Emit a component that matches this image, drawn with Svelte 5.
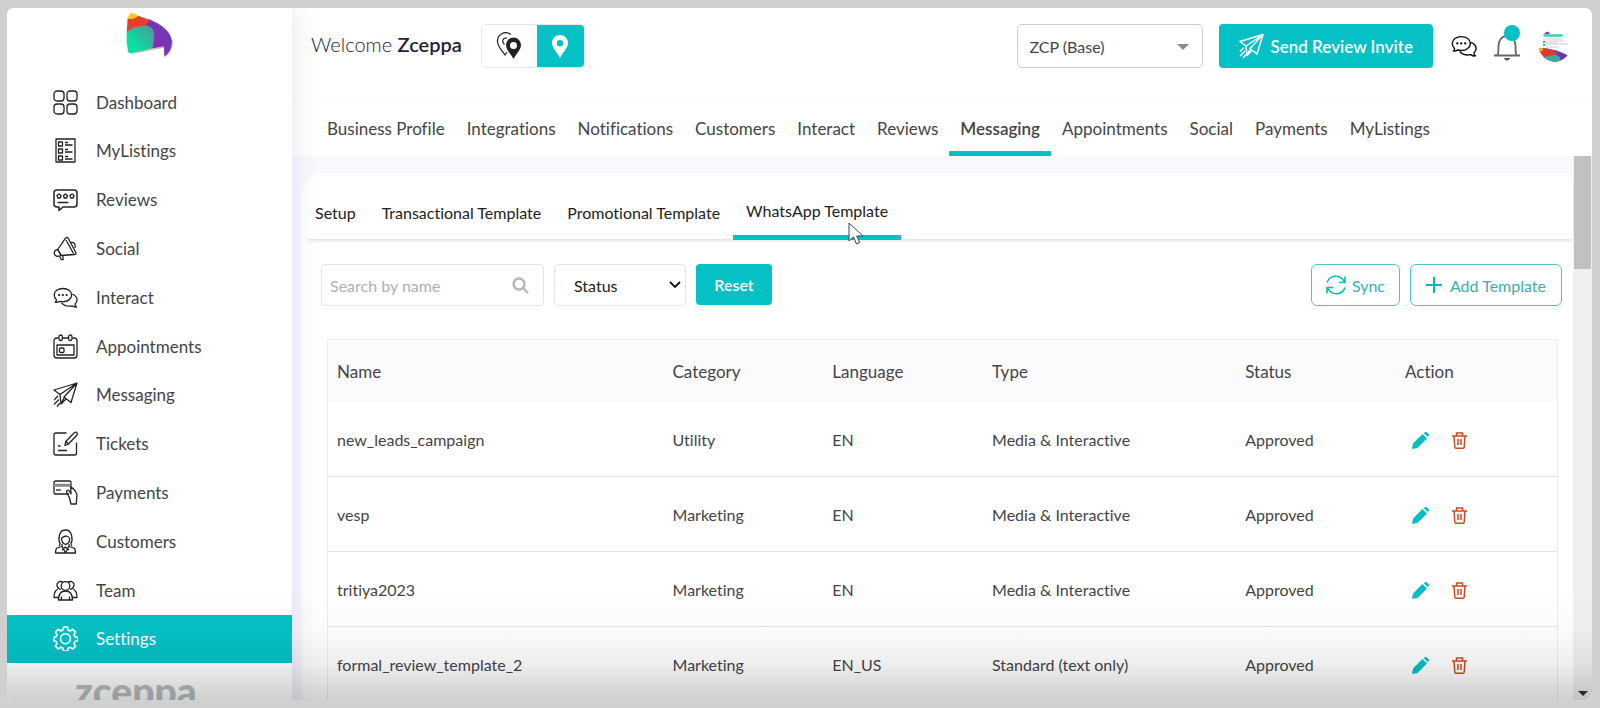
<script lang="ts">
	type Template = {
		name: string;
		category: string;
		language: string;
		type: string;
		status: string;
	};

	const menu = [
		'Dashboard',
		'MyListings',
		'Reviews',
		'Social',
		'Interact',
		'Appointments',
		'Messaging',
		'Tickets',
		'Payments',
		'Customers',
		'Team',
		'Settings'
	];

	const sections = [
		'Business Profile',
		'Integrations',
		'Notifications',
		'Customers',
		'Interact',
		'Reviews',
		'Messaging',
		'Appointments',
		'Social',
		'Payments',
		'MyListings'
	];

	const tabs = ['Setup', 'Transactional Template', 'Promotional Template', 'WhatsApp Template'];

	const templates: Template[] = [
		{ name: 'new_leads_campaign', category: 'Utility', language: 'EN', type: 'Media & Interactive', status: 'Approved' },
		{ name: 'vesp', category: 'Marketing', language: 'EN', type: 'Media & Interactive', status: 'Approved' },
		{ name: 'tritiya2023', category: 'Marketing', language: 'EN', type: 'Media & Interactive', status: 'Approved' },
		{ name: 'formal_review_template_2', category: 'Marketing', language: 'EN_US', type: 'Standard (text only)', status: 'Approved' }
	];

	let active_menu = $state('Settings');
	let active_section = $state('Messaging');
	let active_tab = $state('WhatsApp Template');
	let single_location = $state(true);
	let search = $state('');
	let status = $state('');

	let rows = $derived(
		templates.filter((t) => t.name.includes(search) && (status === '' || t.status === status))
	);

	function reset() {
		search = '';
		status = '';
	}
</script>

{#snippet chat_icon()}
	<path d="M2.2 15.4c.9-.6 1.3-1.500 1.200-2.600C2 11.400 1.200 9.800 1.200 8c0-3.900 3.900-6.500 8.700-6.500s8.700 2.600 8.700 6.500-3.900 6.800-8.700 6.800c-1.200 0-2.300-.2-3.300-.5-1.300.9-2.700 1.300-4.400 1.100z" />
	<path d="M19.200 7c3.100 1.200 4.900 3.300 4.900 5.800 0 1.700-.8 3.200-2.100 4.300 0 1.300.5 2.200 1.500 2.900-1.700.3-3.200-.2-4.400-1.200-4.300.9-8.300-.3-10.600-3" />
	<path d="M6 8h.1M9.800 8h.1M13.600 8h.1" stroke-width="2.200" stroke-linecap="round" />
{/snippet}

{#snippet plane_icon()}
	<path d="M24 1 1 8l6 4.500L24 1 11 15l7 5.500L24 1zM7 12.500l1 9.500 3.300-6.800M8 22l5-5" />
	<path d="M5 14l-4 4M6 17.500l-5 5M7 21l-3 3.500" />
{/snippet}

{#snippet menu_icon(name: string)}
	<svg class="menu_icon" viewBox="0 0 25 25" fill="none" stroke="currentColor" stroke-width="1.300" stroke-linejoin="round" aria-hidden="true">
		{#if name === 'Dashboard'}
			<rect x="1" y="1" width="10" height="10" rx="3" />
			<rect x="14" y="1" width="10" height="10" rx="3" />
			<rect x="1" y="14" width="10" height="10" rx="3" />
			<rect x="14" y="14" width="10" height="10" rx="3" />
		{:else if name === 'MyListings'}
			<path d="M3 1h19v23H3z" />
			<path d="M5.500 4h4v4h-4zM5.500 11h4v4h-4zM5.500 18h4v4h-4z" />
			<path d="M12 4.500h3M12 7h7.500M12 11.500h3M12 14h7.500M12 18.500h3M12 21h7.500" />
		{:else if name === 'Reviews'}
			<path d="M4 3h17q3 0 3 3v11q0 3-3 3H10l-4 3.500V20H4q-3 0-3-3V6q0-3 3-3z" stroke-width="1.500" />
			<path d="M6 7l2 1.500-.8 2.500H4.800L4 8.500zM12.500 7l2 1.500-.8 2.500h-2.400l-.8-2.500zM19 7l2 1.500-.8 2.500h-2.400L17 8.500z" />
			<path d="M4.500 15.500h11" />
		{:else if name === 'Social'}
			<path d="M12.500 2.200q1.500-1.700 2.700 0l7.600 14.300q.7 2-1.500 2L8 19.500l-3.300-6z" />
			<path d="M13 4l7.500 13.500M5 13.300q-4 .8-3.700 4 .8 4.400 6.700 2.200M5 14l3 5M18 6.500q5-.5 4 5.300M6.500 20.200l1.700 3.300 2 .2-.4-4.200" />
		{:else if name === 'Interact'}
			<g transform="translate(0 2)">{@render chat_icon()}</g>
		{:else if name === 'Appointments'}
			<path d="M5.500 4H4Q1 4 1 7v14q0 3 3 3h17q3 0 3-3V7q0-3-3-3h-1.500M10 4h5" />
			<rect x="6" y="1" width="3.400" height="5.500" rx="1.700" />
			<rect x="15.600" y="1" width="3.400" height="5.500" rx="1.700" />
			<path d="M4 11h17v10H4z" />
			<rect x="6.500" y="14" width="4.500" height="4.500" rx="1" />
		{:else if name === 'Messaging'}
			{@render plane_icon()}
		{:else if name === 'Tickets'}
			<path d="M13.500 2H3q-2 0-2 2v18q0 2 2 2h18.500q2 0 2-2V11.500" />
			<path d="M12 14.500l.8-4L21.500 1.500q1.500-.8 2.500.4.8 1.300-.2 2.300L15.500 13zM13 10.500l2.500 2.500" />
			<path d="M5 15h2.500M5 19.500h9" />
		{:else if name === 'Payments'}
			<path d="M16 14H3q-2 0-2-1.500v-10Q1 1 3 1h13.500Q18 1 18 2.500V6" />
			<path d="M1 4.500h17M1 6h17" stroke="#888" stroke-width="1.600" />
			<path d="M3 10h5" />
			<path d="M18 24l-1.500-6-3-6.500q.3-2 2.500-1l2 3.500-.3-7.500 4.300 4 2 4-.8 9.500z" />
		{:else if name === 'Customers'}
			<path d="M6 17q2-2.500 0-5Q5.500 1 12.500 1T19 12q-2 2.500 0 5" />
			<path d="M8.500 9q3-2 5-2 3.500 1 3 3.500 0 4-4 5-4-1.500-4-6.500z" />
			<path d="M9 15v2.500l-5 1.500q-1.500 1-1.500 5h20q0-4-1.500-5l-5-1.500V15M9 17l3.500 7 3.500-7M9 21l3.500-3 3.500 3" />
		{:else if name === 'Team'}
			<circle cx="12.500" cy="8" r="4.300" />
			<path d="M5.500 22q0-9 7-9t7 9zM8.500 18.500V22M16.500 18.500V22" />
			<path d="M8 11.500Q3.500 10 4 6q1.800-3.800 6-1.800M17 11.500q4.500-1.500 4-5.500-1.800-3.800-6-1.800M4.800 11Q1 13 1 19.500h4M20.200 11Q24 13 24 19.500h-4" />
		{:else}
			<path stroke-width="1.700" d="M10.600 1h3.800l.8 3.100 2 .8 2.700-1.600 2.700 2.700-1.600 2.700.8 2 3.100.8v3.200l-3.100.8-.8 2 1.600 2.700-2.700 2.700-2.700-1.600-2 .8-.8 3.100h-3.800l-.8-3.100-2-.8-2.700 1.600L2.400 20.200 4 17.500l-.8-2L.8 14.700v-3.200l2.400-.8.8-2L2.400 6l2.700-2.700 2.700 1.600 2-.8z" />
			<circle cx="12.500" cy="12.700" r="5" stroke-width="1.600" />
		{/if}
	</svg>
{/snippet}

<div class="window">
	<aside class="sidebar">
		<a class="logo" href="#home" aria-label="Home">
			<svg width="49" height="47" viewBox="379 36 147 141">
				<defs>
					<linearGradient id="leaf" x1="0" y1="1" x2="1" y2="0">
						<stop offset="0.300" stop-color="#08dfa0" />
						<stop offset="1" stop-color="#5b8f98" />
					</linearGradient>
					<linearGradient id="wing" x1="0" y1="1" x2="1" y2="0">
						<stop offset="0" stop-color="#a81cb4" />
						<stop offset="1" stop-color="#5745b8" />
					</linearGradient>
				</defs>
				<path d="M393 163l102-20 3 30q28-20 24-52z" fill="#bdbdbd" />
				<path d="M450 57q68 28 70 69-3 31-23 43l-1-30-36 6q10-50-24-66z" fill="url(#wing)" />
				<path d="M387 54l32-7 34 13-15 23-54 15z" fill="#e83c2f" />
				<path d="M388 57q2-15 8-17 10-2 23 7-12 12-31 10z" fill="#fdc70c" />
				<path d="M384 96q26-20 58-19 20 1 25 23 0 22-6 45l-63 15q-8 1-10-6-6-28-4-58z" fill="url(#leaf)" />
			</svg>
		</a>
		<nav class="menu" aria-label="Main">
			{#each menu as item}
				<a
					href="#{item.toLowerCase()}"
					class="menu_item"
					class:active={active_menu === item}
					onclick={() => (active_menu = item)}
				>
					{@render menu_icon(item)}
					{item}
				</a>
			{/each}
		</nav>
		<div class="brand">zceppa</div>
	</aside>

	<main class="main">
		<header class="header">
			<h1 class="welcome">Welcome <strong>Zceppa</strong></h1>
			<div class="toggle">
				<button class="toggle_btn" class:on={!single_location} aria-label="All locations" onclick={() => (single_location = false)}>
					<svg width="26" height="28" viewBox="0 0 26 28">
						<path d="M15 2.500C8-2 1 3 1.500 10c.5 5 4.500 8.500 7.500 13l2-3M11 6C6.500 5.500 5.500 10 8.500 12.500" fill="none" stroke="#222" stroke-width="1.200" />
						<path fill="#1f2326" fill-rule="evenodd" d="M17.500 5.500a7.500 7.500 0 0 1 7.500 7.500c0 5-5 9-7.500 14-2.500-5-7.500-9-7.500-14a7.500 7.500 0 0 1 7.500-7.500zm0 4.500a3.500 3.500 0 1 0 0 7 3.500 3.500 0 0 0 0-7z" />
					</svg>
				</button>
				<button class="toggle_btn" class:on={single_location} aria-label="Single location" onclick={() => (single_location = true)}>
					<svg width="16" height="23" viewBox="0 0 16 23">
						<path fill="#fff" fill-rule="evenodd" d="M8 0a8 8 0 0 1 8 8c0 5-5 9-8 15C5 17 0 13 0 8a8 8 0 0 1 8-8zm0 5a3.200 3.200 0 1 0 0 6.400A3.200 3.200 0 0 0 8 5z" />
					</svg>
				</button>
			</div>
			<div class="header_right">
				<div class="select_wrap">
					<select class="business" aria-label="Business">
						<option>ZCP (Base)</option>
					</select>
					<svg class="business_arrow" width="12" height="6" viewBox="0 0 12 6"><path d="M0 0h12L6 6z" fill="#888" /></svg>
				</div>
				<button class="invite">
					<svg width="25" height="26" viewBox="0 0 25 25" fill="none" stroke="currentColor" stroke-width="1.500" stroke-linejoin="round">{@render plane_icon()}</svg>
					Send Review Invite
				</button>
				<button class="icon_btn" aria-label="Conversations">
					<svg width="26" height="22" viewBox="0 0 25 21" fill="none" stroke="#111" stroke-width="1.400" stroke-linejoin="round">{@render chat_icon()}</svg>
				</button>
				<button class="icon_btn bell" aria-label="Notifications">
					<svg width="28" height="29" viewBox="0 0 28 29" fill="none" stroke="#666" stroke-width="1.800">
						<path d="M1 23.500h26M4.500 23c1-2 1-5 1-9C5.500 8 9 4 14 4s8.500 4 8.500 10c0 4 0 7 1 9" />
						<path d="M11 26h6q-.5 2.500-3 2.500T11 26z" fill="#555" stroke="none" />
					</svg>
					<span class="dot"></span>
				</button>
				<button class="icon_btn" aria-label="Profile">
					<svg width="32" height="34" viewBox="0 0 32 34">
						<clipPath id="avatar"><circle cx="16" cy="16.500" r="16" /></clipPath>
						<g clip-path="url(#avatar)">
							<path d="M4 5V2q4-2 7 3z" fill="#6d3ab2" />
							<path d="M4 6h20M5 7h18" stroke="#3bd0aa" stroke-width="1.400" />
							<path d="M4 10h19M10 12h15M7 14h11M7 18h13M7 15h22" stroke="#bbb3c4" stroke-width="0.700" />
							<path d="M4 13h2M4 16h2" stroke="#08cba6" stroke-width="2" />
							<path d="M0 19q17 0 32 9v6H0z" fill="#6839b5" />
							<path d="M0 19q12 0 17 4l3 11H0z" fill="#df3a2d" />
							<path d="M0 19l4 .5-1 3-3-.5z" fill="#fdc70c" />
							<path d="M2 29q17-6 19 0v5H0z" fill="#37ac9b" />
						</g>
					</svg>
				</button>
			</div>
		</header>

		<nav class="sections" aria-label="Settings sections">
			{#each sections as section}
				<a
					href="#{section.toLowerCase().replace(' ', '-')}"
					class="section"
					class:active={active_section === section}
					onclick={() => (active_section = section)}>{section}</a
				>
			{/each}
		</nav>

		<div class="body">
			<div class="card">
				<div class="tabs" role="tablist">
					{#each tabs as tab}
						<button
							role="tab"
							class="tab"
							class:active={active_tab === tab}
							aria-selected={active_tab === tab}
							onclick={() => (active_tab = tab)}>{tab}</button
						>
					{/each}
					<svg class="pointer" width="16" height="24" viewBox="0 0 16 24" aria-hidden="true">
						<path d="M1 1v18l4.500-4 3 7 3.200-1.500-3-6.500H15z" fill="#fff" stroke="#3b3f63" />
					</svg>
				</div>

				<div class="filters">
					<div class="search">
						<input type="text" placeholder="Search by name" aria-label="Search by name" bind:value={search} />
						<svg width="17" height="17" viewBox="0 0 17 17" fill="none" stroke="#b5b5b5" stroke-width="2.400"><circle cx="7" cy="7" r="5.500" /><path d="M11 11l5 5" /></svg>
					</div>
					<div class="select_wrap">
						<select class="status" aria-label="Status" bind:value={status}>
							<option value="">Status</option>
							<option>Approved</option>
							<option>Pending</option>
							<option>Rejected</option>
						</select>
						<svg class="status_arrow" width="12" height="8" viewBox="0 0 12 8" fill="none" stroke="#111" stroke-width="1.800"><path d="M1 1l5 5 5-5" /></svg>
					</div>
					<button class="reset" onclick={reset}>Reset</button>
					<div class="filters_right">
						<button class="outline">
							<svg width="20" height="20" viewBox="0 0 20 20" fill="none" stroke="#05b9bd" stroke-width="1.600">
								<path d="M1 7.500A9.200 9.200 0 0 1 18 6.500M19 1.500v6h-6M19 12.500A9.200 9.200 0 0 1 2 13.500M1 18.500v-6h6" />
							</svg>
							Sync
						</button>
						<button class="outline">
							<svg width="16" height="16" viewBox="0 0 16 16" stroke="#05b9bd" stroke-width="2"><path d="M8 0v16M0 8h16" /></svg>
							Add Template
						</button>
					</div>
				</div>

				<table class="templates">
					<thead>
						<tr>
							<th class="col_name">Name</th>
							<th class="col">Category</th>
							<th class="col">Language</th>
							<th class="col_type">Type</th>
							<th class="col">Status</th>
							<th>Action</th>
						</tr>
					</thead>
					<tbody>
						{#each rows as row}
							<tr>
								<td>{row.name}</td>
								<td>{row.category}</td>
								<td>{row.language}</td>
								<td>{row.type}</td>
								<td>{row.status}</td>
								<td>
									<div class="actions">
										<button class="icon_btn" aria-label="Edit {row.name}">
											<svg width="17" height="17" viewBox="0 0 17 17" fill="#05bfc3"><path d="M0 17l1-5.500L10.500 2 15 6.500 5.500 16zM11.700 1.200L13 .2q1-.6 2 .3l1.500 1.500q.8 1 .1 2L15.700 5z" /></svg>
										</button>
										<button class="icon_btn" aria-label="Delete {row.name}">
											<svg width="15" height="17" viewBox="0 0 15 17" fill="none" stroke="#cb4a20" stroke-width="1.500"><path d="M0 4h15M2 4l.8 11q.1 1.200 1.200 1.200h7q1.100 0 1.200-1.200L13 4M4.500 4V1h6v3M6 7v6M9 7v6" /></svg>
										</button>
									</div>
								</td>
							</tr>
						{/each}
					</tbody>
				</table>
			</div>
			<div class="scrollbar" aria-hidden="true">
				<div class="thumb"></div>
				<svg width="10" height="5" viewBox="0 0 10 5"><path d="M0 0h10L5 5z" fill="#333" /></svg>
			</div>
		</div>
	</main>
	<div class="fade"></div>
</div>

<style>
	:global(body) {
		background: #d0d0d0;
		font-family: Lato, 'Liberation Sans', sans-serif;
		font-variant-ligatures: none;
		color: #444448;
	}

	:global(#app) {
		box-sizing: border-box;
		height: 100vh;
		padding: 8px 8px 8px 7px;
	}

	* {
		box-sizing: border-box;
	}

	button,
	input,
	select {
		font: inherit;
		font-variant-ligatures: none;
		color: inherit;
	}

	button {
		cursor: pointer;
	}

	a {
		color: inherit;
		text-decoration: none;
	}

	svg {
		display: block;
		flex: none;
	}

	.window {
		position: relative;
		display: flex;
		height: 100%;
		background: #fff;
		border-radius: 7px;
		overflow: hidden;
	}

	.fade {
		position: absolute;
		inset: auto 0 0 0;
		z-index: 2;
		height: 110px;
		background: linear-gradient(rgba(0, 0, 0, 0), rgba(0, 0, 0, 0.02) 40%, rgba(0, 0, 0, 0.07) 68%, rgba(0, 0, 0, 0.19));
		pointer-events: none;
	}

	/* sidebar */
	.sidebar {
		position: relative;
		z-index: 1;
		flex: none;
		width: 285px;
		background: #fff;
		box-shadow: 0 0 26px rgba(70, 50, 110, 0.14);
	}

	.logo {
		display: flex;
		justify-content: center;
		height: 70px;
		padding-top: 4px;
	}

	.menu {
		display: flex;
		flex-direction: column;
		justify-content: space-between;
		height: 585px;
	}

	.menu_item {
		display: flex;
		align-items: center;
		gap: 18px;
		height: 48px;
		padding-left: 46px;
		font-size: 17px;
	}

	.menu_item.active {
		background: #05c1c5;
		color: #fff;
	}

	.menu_icon {
		width: 25px;
		height: 25px;
		color: #222;
	}

	.active .menu_icon {
		color: #fff;
	}

	.brand {
		margin-top: 6px;
		padding-left: 68px;
		font-size: 39px;
		line-height: 44px;
		font-weight: 900;
		color: #b9c0c2;
	}

	/* header */
	.main {
		flex: 1;
		min-width: 0;
		display: flex;
		flex-direction: column;
	}

	.header {
		display: flex;
		align-items: flex-start;
		height: 91px;
		padding: 16px 21px 0 19px;
		border-bottom: 1px solid #fbf9fd;
	}

	.welcome {
		margin: 0;
		font-size: 20px;
		line-height: 40px;
		font-weight: 300;
		color: #221e3e;
	}

	.welcome strong {
		font-weight: 600;
	}

	.toggle {
		display: flex;
		height: 44px;
		margin-left: 19px;
		border: 1px solid #e6e6e8;
		border-radius: 5px;
		overflow: hidden;
	}

	.toggle_btn {
		display: flex;
		align-items: center;
		justify-content: center;
		width: 55px;
		padding: 0;
		border: 0;
		background: #fff;
	}

	.toggle_btn.on {
		width: 47px;
		background: #05c1c5;
	}

	.header_right {
		display: flex;
		align-items: center;
		margin-left: auto;
		height: 44px;
	}

	.select_wrap {
		position: relative;
	}

	.business {
		appearance: none;
		width: 186px;
		height: 44px;
		padding: 0 12px;
		border: 1px solid #ccc;
		border-radius: 5px;
		background: #fff;
		font-size: 16px;
	}

	.business_arrow {
		position: absolute;
		right: 14px;
		top: 20px;
		pointer-events: none;
	}

	.invite {
		display: flex;
		align-items: center;
		gap: 7px;
		height: 44px;
		margin: 0 18px 0 16px;
		padding: 0 20px;
		border: 0;
		border-radius: 4px;
		background: #05c1c5;
		color: #fff;
		font-size: 17px;
		font-weight: 600;
	}

	.icon_btn {
		padding: 0;
		border: 0;
		background: none;
	}

	.bell {
		position: relative;
		margin: 0 18px 0 16px;
	}

	.dot {
		position: absolute;
		top: -7px;
		right: 1px;
		width: 16px;
		height: 16px;
		border-radius: 50%;
		background: #05c1c5;
	}

	.sections {
		display: flex;
		flex: none;
		height: 57px;
		padding-left: 24px;
	}

	.section {
		padding: 0 11px;
		border-bottom: 5px solid transparent;
		font-size: 17px;
		line-height: 60px;
		height: 57px;
		white-space: nowrap;
	}

	.section.active {
		border-color: #05c1c5;
		font-weight: 600;
	}

	/* content */
	.body {
		flex: 1;
		min-height: 0;
		display: flex;
		background: #f9f8fe;
		overflow: hidden;
	}

	.card {
		flex: 1;
		min-width: 0;
		margin: 17px 0 0 10px;
		background: #fff;
		border-radius: 20px 8px 0 0;
	}

	.tabs {
		position: relative;
		display: flex;
		height: 67px;
		margin-left: 6px;
		padding-top: 12px;
		border-bottom: 1px solid #e8e8ea;
		box-shadow: 0 3px 3px -1px rgba(0, 0, 0, 0.08);
	}

	.tab {
		height: 55px;
		padding: 0 13px;
		border: 0;
		background: none;
		font-size: 16px;
		color: #222;
	}

	.tab:first-child {
		padding-left: 7px;
	}

	.tab.active {
		border-bottom: 5px solid #05c1c5;
	}

	.pointer {
		position: absolute;
		left: 540px;
		top: 49px;
	}

	.filters {
		display: flex;
		gap: 10px;
		padding: 24px 11px 0 19px;
	}

	.search {
		display: flex;
		align-items: center;
		width: 223px;
		height: 42px;
		padding: 0 14px 0 8px;
		border: 1px solid #e5e5e7;
		border-radius: 4px;
	}

	.search input {
		flex: 1;
		min-width: 0;
		padding: 0;
		border: 0;
		outline: 0;
		font-size: 16px;
	}

	.search input::placeholder {
		color: #b0b0b0;
	}

	.status {
		appearance: none;
		width: 132px;
		height: 42px;
		padding: 0 19px;
		border: 1px solid #e5e5e7;
		border-radius: 4px;
		background: #fff;
		font-size: 16px;
		color: #222;
	}

	.status_arrow {
		position: absolute;
		right: 5px;
		top: 17px;
		pointer-events: none;
	}

	.reset {
		height: 41px;
		width: 76px;
		padding: 0;
		border: 0;
		border-radius: 4px;
		background: #05c1c5;
		color: #fff;
		font-size: 16px;
		font-weight: 600;
	}

	.filters_right {
		display: flex;
		gap: 10px;
		margin-left: auto;
	}

	.outline {
		display: flex;
		align-items: center;
		gap: 6px;
		height: 42px;
		padding: 0 14px;
		border: 1px solid #4fc3c6;
		border-radius: 6px;
		background: #fff;
		color: #3aaeb1;
		font-size: 16px;
	}

	.outline + .outline {
		gap: 8px;
		padding: 0 15px;
	}

	.templates {
		width: calc(100% - 40px);
		margin: 33px 15px 0 25px;
		border: 1px solid #ebebed;
		border-collapse: separate;
		border-spacing: 0;
		table-layout: fixed;
		font-size: 16px;
	}

	th {
		height: 62px;
		padding: 0 9px;
		background: #fbfbfe;
		font-size: 17px;
		font-weight: 400;
		text-align: left;
	}

	td {
		height: 75px;
		padding: 0 9px;
		border-bottom: 1px solid #e4e4e6;
	}

	.col_name {
		width: 27.3%;
	}

	.col {
		width: 13%;
	}

	.col_type {
		width: 20.6%;
	}

	.actions {
		display: flex;
		gap: 23px;
		padding: 2px 0 0 7px;
	}

	.scrollbar {
		flex: none;
		display: flex;
		flex-direction: column;
		align-items: center;
		justify-content: space-between;
		width: 19px;
		padding-bottom: 4px;
		background: #f0f0f0;
	}

	.thumb {
		width: 17px;
		height: 113px;
		background: #c1c1c1;
	}
</style>
